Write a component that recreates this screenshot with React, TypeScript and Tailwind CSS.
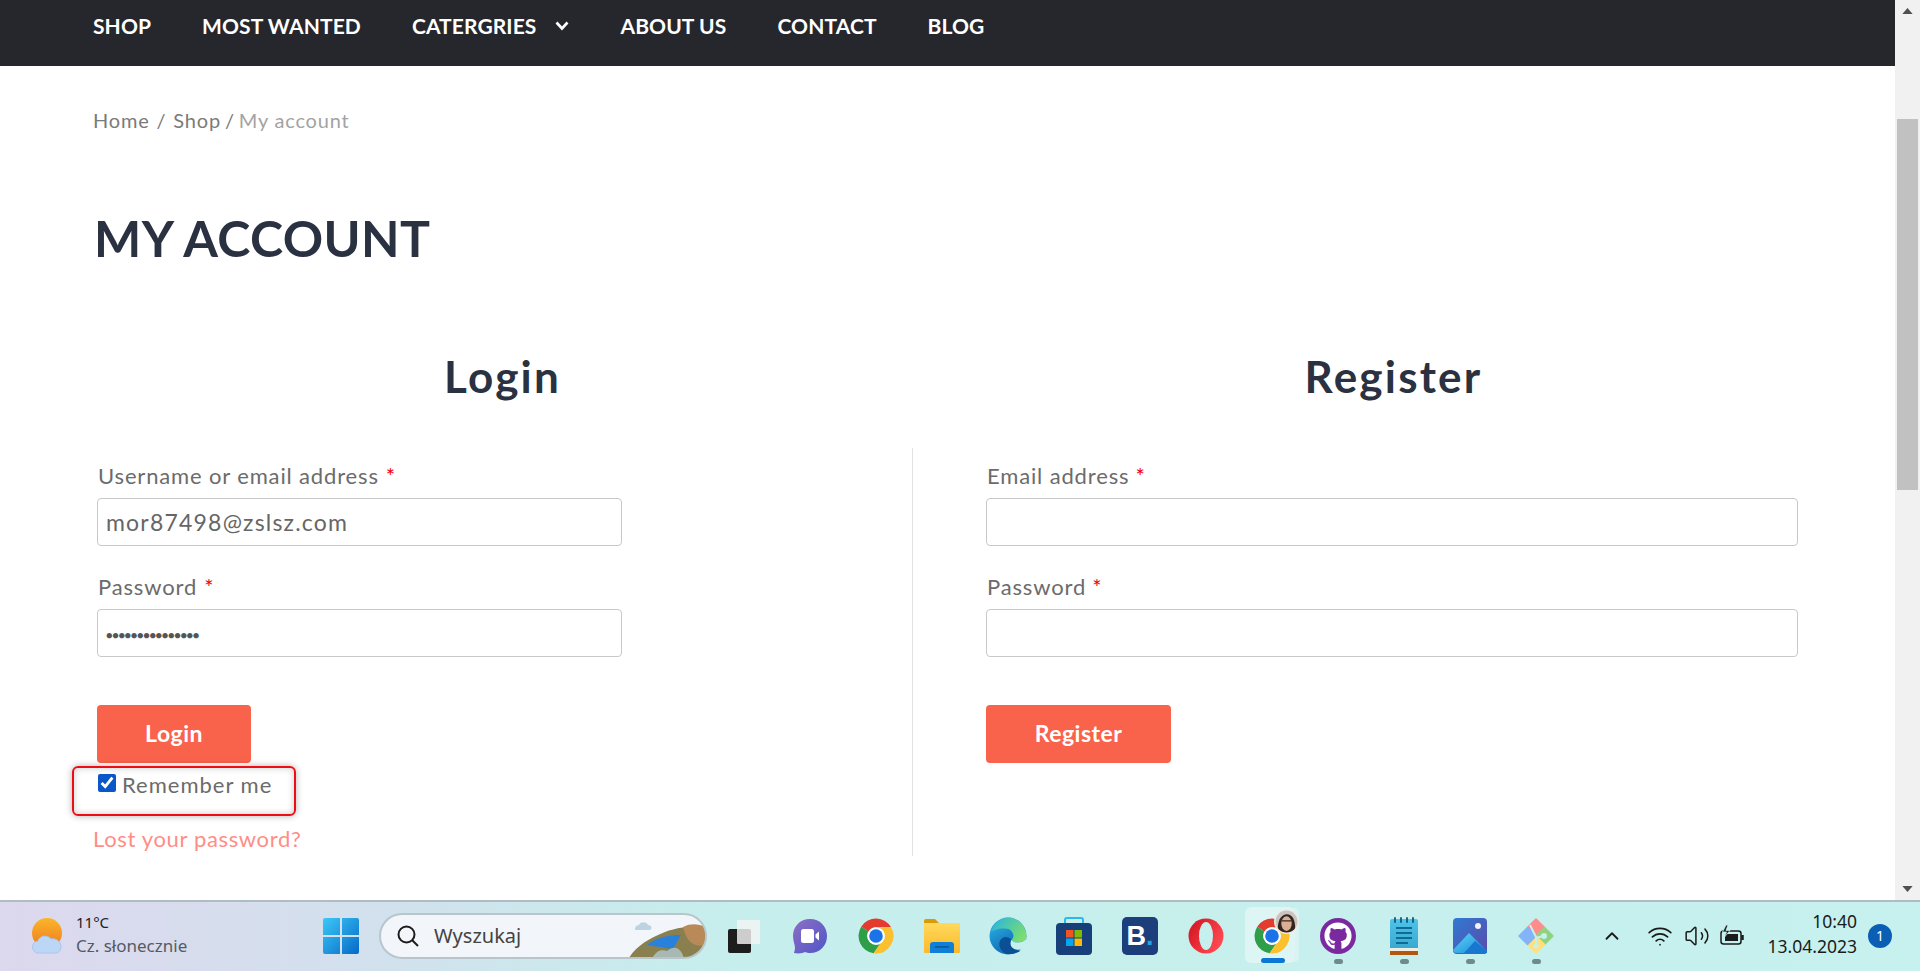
import React from "react";
import { ChevronUp, Wifi, Volume2 } from "lucide-react";
import { FaGithub } from "react-icons/fa";

const navLinks = ["SHOP", "MOST WANTED", "CATERGRIES", "ABOUT US", "CONTACT", "BLOG"];

const ChromeIcon = () => (
  <svg viewBox="0 0 48 48" className="w-[38px] h-[38px]">
    <path d="M5.5 12A22 22 0 0 1 43.05 13H24A11 11 0 0 0 14.5 18.5Z" fill="#e33b2e" />
    <path d="M5.5 12A22 22 0 0 0 21 45.8L29.5 33.5A11 11 0 0 1 14.5 18.5Z" fill="#2f9e48" />
    <path d="M24 13H43.05A22 22 0 0 1 21 45.8L29.5 33.5A11 11 0 0 0 24 13Z" fill="#fbc02d" />
    <circle cx="24" cy="24" r="11" fill="#fff" />
    <circle cx="24" cy="24" r="8.6" fill="#1a73e8" />
  </svg>
);

const TaskViewIcon = () => (
  <svg viewBox="0 0 36 36" className="w-[36px] h-[36px]">
    <rect x="2" y="11" width="23" height="24" rx="2" fill="#1d1d1d" />
    <rect x="11" y="2" width="23" height="24" rx="1" fill="#f4f4f4" fillOpacity="0.82" />
  </svg>
);

const MeetIcon = () => (
  <svg viewBox="0 0 36 36" className="w-[36px] h-[36px]">
    <defs>
      <linearGradient id="meet" x1="0" y1="0" x2="1" y2="1">
        <stop offset="0" stopColor="#8d6fc4" />
        <stop offset="1" stopColor="#4f56c6" />
      </linearGradient>
    </defs>
    <path d="M18 1C8 1 1 8.500 1 18c0 5 2 9 2 12 0 2-1 4-1 5 5 1 9 0 11-1 2 .7 3.500 1 5 1 10 0 17-7.500 17-17S28 1 18 1Z" fill="url(#meet)" />
    <rect x="9" y="11" width="13" height="14" rx="2.500" fill="#fff" />
    <path d="M23.500 16.500 27 13.500v9l-3.500-3Z" fill="#fff" />
  </svg>
);

const FolderIcon = () => (
  <svg viewBox="0 0 38 36" className="w-[38px] h-[36px]">
    <defs>
      <linearGradient id="folder" x1="0" y1="0" x2="0" y2="1">
        <stop offset="0" stopColor="#ffd95c" />
        <stop offset="1" stopColor="#fcb92b" />
      </linearGradient>
    </defs>
    <path d="M1 3a2 2 0 0 1 2-2h9l4 4h-15Z" fill="#d99b07" />
    <rect x="1" y="5" width="36" height="30" rx="1" fill="url(#folder)" />
    <path d="M7 35V27a3 3 0 0 1 3-3h18a3 3 0 0 1 3 3v8Z" fill="#0f7fd8" />
    <rect x="12" y="28" width="14" height="1.800" fill="#0a5ca3" />
  </svg>
);

const EdgeIcon = () => (
  <svg viewBox="0 0 36 36" className="w-[38px] h-[38px]">
    <defs>
      <linearGradient id="edgeA" x1="0" y1="0" x2="0.6" y2="1">
        <stop offset="0" stopColor="#2fb9e8" />
        <stop offset="1" stopColor="#0c62b0" />
      </linearGradient>
      <linearGradient id="edgeB" x1="0" y1="0.2" x2="1" y2="0.7">
        <stop offset="0" stopColor="#2cb5dd" />
        <stop offset="1" stopColor="#7de06a" />
      </linearGradient>
    </defs>
    <circle cx="18" cy="18" r="17.500" fill="url(#edgeA)" />
    <path d="M35.500 18C35.500 22 32 24 27 24 24 24 22 23 22 21 18 25 21 31 28 31 31 31 33 30 34 28 35 25 35.500 21 35.500 18Z" fill="#c5f0ee" />
    <path d="M21 21C16 17 11 19 10 24 9 29 12 33 17 35 20 35.500 26 35 30 32 24 32 18 29 21 21Z" fill="#0b4f94" />
    <path d="M2 14C5 5 12 .5 18 .5 28 .5 35.500 9 35.500 18 35.500 22 32 24 27 24 22 24 21 22 23 19 24 14 19 10 14 11 8 11 4 13 2 14Z" fill="url(#edgeB)" />
  </svg>
);

const StoreIcon = () => (
  <svg viewBox="0 0 36 38" className="w-[36px] h-[38px]">
    <path d="M9 9V3a2 2 0 0 1 2-2h14a2 2 0 0 1 2 2v6" fill="none" stroke="#2bb8ee" strokeWidth="2" />
    <rect y="6" width="36" height="32" rx="4" fill="#17407a" />
    <rect x="10" y="13" width="7.500" height="7.500" fill="#f25325" />
    <rect x="18.500" y="13" width="7.500" height="7.500" fill="#80bb02" />
    <rect x="10" y="21.500" width="7.500" height="7.500" fill="#04a6f0" />
    <rect x="18.500" y="21.500" width="7.500" height="7.500" fill="#ffb902" />
  </svg>
);

const OperaIcon = () => (
  <svg viewBox="0 0 36 36" className="w-[36px] h-[36px]">
    <defs>
      <linearGradient id="opera" x1="0" y1="0" x2="1" y2="0.6">
        <stop offset="0" stopColor="#d0101f" />
        <stop offset="1" stopColor="#ff4a50" />
      </linearGradient>
    </defs>
    <circle cx="18" cy="18" r="17.500" fill="url(#opera)" />
    <ellipse cx="18" cy="18" rx="7" ry="14" fill="#c5f0ee" />
  </svg>
);

const NotepadIcon = () => (
  <svg viewBox="0 0 30 38" className="w-[30px] h-[38px]">
    <defs>
      <linearGradient id="pad" x1="0" y1="0" x2="0" y2="1">
        <stop offset="0" stopColor="#4fc3ea" />
        <stop offset="1" stopColor="#3aa9cf" />
      </linearGradient>
    </defs>
    <rect x="1" y="32" width="28" height="6" fill="#b3560f" />
    <rect x="1" y="31" width="28" height="3" fill="#f1ece4" />
    <path d="M1 4a2 2 0 0 1 2-2h24a2 2 0 0 1 2 2v27H1Z" fill="url(#pad)" />
    <path d="M6 1v4M12 1v4M18 1v4M24 1v4" stroke="#0c5a80" strokeWidth="1.800" strokeLinecap="round" />
    <path d="M7 11h16M7 16h16M7 21h16M7 26h12" stroke="#0e6b93" strokeWidth="1.800" />
  </svg>
);

const PhotosIcon = () => (
  <svg viewBox="0 0 34 36" className="w-[34px] h-[36px]">
    <defs>
      <linearGradient id="photosBg" x1="0" y1="0" x2="1" y2="1">
        <stop offset="0" stopColor="#2f7ad4" />
        <stop offset="1" stopColor="#5b4aa8" />
      </linearGradient>
      <linearGradient id="photosHill" x1="0" y1="0" x2="1" y2="1">
        <stop offset="0" stopColor="#5fd6f7" />
        <stop offset="1" stopColor="#1785d8" />
      </linearGradient>
    </defs>
    <rect width="34" height="36" rx="4" fill="url(#photosBg)" />
    <circle cx="25" cy="8" r="3" fill="#f2f2f8" />
    <path d="M0 32 16 15l18 18v-1 3H4a4 4 0 0 1-4-3Z" fill="url(#photosHill)" />
    <path d="M10 36 22 23l12 10a3 3 0 0 1-3 3Z" fill="#1878cf" />
  </svg>
);

const GitDiamondIcon = () => (
  <svg viewBox="0 0 38 38" className="w-[38px] h-[38px]">
    <g strokeLinejoin="round" strokeWidth="1.500">
      <path d="M19 2 27.500 10.500 19 19 10.500 10.500Z" fill="#ff8b8b" stroke="#ff8b8b" />
      <path d="M36 19 27.500 27.500 19 19 27.500 10.500Z" fill="#8fd37f" stroke="#8fd37f" />
      <path d="M19 36 10.500 27.500 19 19 27.500 27.500Z" fill="#ffe07a" stroke="#ffe07a" />
      <path d="M2 19 10.500 10.500 19 19 10.500 27.500Z" fill="#82b4f7" stroke="#82b4f7" />
    </g>
    <path d="M13 8 19 20M19 20 19 28M19 21 26 19" stroke="#c5f0ee" strokeWidth="2" fill="none" />
    <circle cx="27" cy="19" r="3" fill="#c5f0ee" />
    <circle cx="19" cy="29" r="2.500" fill="#c5f0ee" />
  </svg>
);

const BatteryIcon = () => (
  <svg viewBox="0 0 26 24" className="w-[26px] h-[24px]" fill="none" stroke="#1b1b1b" strokeWidth="1.500">
    <rect x="1" y="7" width="20" height="13" rx="2.500" />
    <rect x="5" y="10" width="13" height="7" fill="#1b1b1b" stroke="none" />
    <path d="M22.500 11v5" strokeWidth="2.500" />
    <path d="M6 1 2.500 8h4L4.500 13 10 6.500H6L8 1Z" fill="#1b1b1b" stroke="#c5f0ee" strokeWidth="0.800" />
  </svg>
);

const AppCell = ({ children, running, active }: { children: React.ReactNode; running?: boolean; active?: boolean }) => (
  <div className="relative w-[66px] h-full flex items-center justify-center">
    {active && <div className="absolute left-[6px] top-[5px] w-[50px] h-[56px] rounded-md bg-white/40 shadow-[5px_0_0_-1px_rgba(255,255,255,0.3)]" />}
    <div className="relative flex items-center justify-center">{children}</div>
    {running && <div className="absolute bottom-[5px] left-[29px] w-[9px] h-[5px] rounded-full bg-[#6f8a8c]" />}
    {active && <div className="absolute bottom-[6px] left-[22px] w-[24px] h-[5px] rounded-full bg-[#0a78d4]" />}
  </div>
);

const Field = ({ label, value, dots, gap }: { label: string; value?: string; dots?: boolean; gap: string }) => (
  <div className="mb-[29px]">
    <div className="text-[22px] leading-[24px] tracking-[0.85px] text-[#6b6b6b] mb-[10px] pl-px">
      {label}
      <span className={`text-[#f00000] ${gap}`}>*</span>
    </div>
    <div className="h-[48px] border border-[#c9c9c9] rounded-[4px] bg-white px-[8px] flex items-center text-[23px] tracking-[1.2px] text-[#666]">
      {dots ? <span className="text-[11px] tracking-[-0.4px] text-[#555] pt-1">●●●●●●●●●●●●●●●</span> : value}
    </div>
  </div>
);

export default function App() {
  return (
    <div className="h-[971px] w-[1920px] overflow-hidden flex flex-col bg-white font-['Lato',sans-serif]">
      <div className="flex h-[900px]">
        <div className="w-[1895px]">
          {/* top nav */}
          <nav className="h-[66px] bg-[#26272c] pl-[93px] pb-[15px] flex items-center gap-[51px] text-white text-[21px] font-bold tracking-[0.1px]">
            {navLinks.map((l) => (
              <span key={l} className="flex items-center leading-none">
                {l}
                {l === "CATERGRIES" && (
                  <svg viewBox="0 0 14 10" className="w-[14px] h-[10px] ml-[19px]" fill="none" stroke="#fff" strokeWidth="2.600">
                    <path d="M1.500 1.500 7 7.500l5.500-6" />
                  </svg>
                )}
              </span>
            ))}
          </nav>

          <div className="pl-[93px] pt-[42px] text-[20px] leading-[24px] tracking-[0.8px] text-[#7a7a7a]">
            Home<span className="mx-[7px]">/</span>Shop<span className="mx-[4px]">/</span>
            <span className="text-[#a3a3a3]">My account</span>
          </div>

          <h1 className="pl-[94px] mt-[76px] text-[50px] leading-[60px] font-bold tracking-[0.4px] text-[#2a3140]">MY ACCOUNT</h1>

          <div className="grid grid-cols-[819px_1fr] pl-[93px] pr-[20px] mt-[84px]">
            <h2 className="text-center text-[44px] leading-[48px] font-bold tracking-[2.2px] text-[#2a3140] mb-[48px]">Login</h2>
            <h2 className="text-center text-[44px] leading-[48px] font-bold tracking-[2.2px] text-[#2a3140] mb-[48px]">Register</h2>

            <div className="h-[408px] pt-[16px]">
              <div className="pl-[4px] w-[529px]">
                <Field label="Username or email address" value="mor87498@zslsz.com" gap="ml-[7px]" />
                <Field label="Password" dots gap="ml-[7px]" />
              </div>
              <button className="ml-[4px] mt-[48px] pb-[2px] block w-[154px] h-[58px] rounded-[4px] bg-[#f9634b] text-white text-[23px] font-bold tracking-[0.5px]">Login</button>
              <label className="relative ml-[5px] mt-[11px] flex items-start h-[26px]">
                <span className="absolute -left-[26px] -top-[8px] w-[224px] h-[50px] rounded-[6px] border-2 border-[#ee0d14] shadow-[0_0_7px_rgba(0,0,0,0.3),inset_0_0_7px_rgba(0,0,0,0.2)]" />
                <input type="checkbox" defaultChecked className="w-[18px] h-[18px] accent-[#0b57c9]" />
                <span className="ml-[6px] -mt-[1px] text-[22px] leading-[24px] tracking-[1px] text-[#6b6b6b]">Remember me</span>
              </label>
              <div className="mt-[27px] text-[22px] leading-[24px] tracking-[0.65px] text-[#ff8d86]">Lost your password?</div>
            </div>

            <div className="h-[408px] pt-[16px] border-l border-[#e2e2e2] pl-[73px]">
              <div className="w-[812px]">
                <Field label="Email address" gap="ml-[6px]" />
                <Field label="Password" gap="ml-[6px]" />
              </div>
              <button className="mt-[48px] pb-[2px] block w-[185px] h-[58px] rounded-[4px] bg-[#f9634b] text-white text-[23px] font-bold tracking-[0.5px]">Register</button>
            </div>
          </div>
        </div>

        {/* scrollbar */}
        <div className="w-[25px] bg-[#f1f1f1] flex flex-col items-center">
          <svg viewBox="0 0 12 7" className="w-[11px] h-[6px] mt-[8px] fill-[#505050]"><path d="M6 0 12 7H0Z" /></svg>
          <div className="w-[21px] h-[371px] bg-[#c1c1c1] mt-[105px]" />
          <svg viewBox="0 0 12 7" className="w-[11px] h-[6px] mt-auto mb-[8px] fill-[#505050]"><path d="M0 0H12L6 7Z" /></svg>
        </div>
      </div>

      {/* windows taskbar */}
      <div className="h-[71px] pb-[2px] border-t-2 border-[#b0bcc4] bg-[linear-gradient(90deg,#dcd8ee_0%,#d3e0ed_18%,#c6eeec_38%,#c6f1ee_100%)] flex items-center font-['Noto_Sans',sans-serif]">
        <svg viewBox="0 0 34 36" className="w-[34px] h-[36px] ml-[31px]">
          <defs>
            <linearGradient id="sun" x1="0" y1="0" x2="0" y2="1">
              <stop offset="0" stopColor="#fbb62a" />
              <stop offset="1" stopColor="#ee7b1d" />
            </linearGradient>
          </defs>
          <circle cx="16" cy="15" r="15" fill="url(#sun)" />
          <path d="M8 35a6 6 0 0 1-1-12c1-5 9-7 13-2 6-1 10 3 10 8 0 3-2 6-6 6Z" fill="#bcd7f5" stroke="#a9c4ec" />
        </svg>
        <div className="ml-[11px] -mt-[3px] w-[132px] text-[15px] leading-[24px] text-[#222]">
          <div>11°C</div>
          <div className="text-[#555b63] text-[17px]">Cz. słonecznie</div>
        </div>
        <svg viewBox="0 0 36 36" className="w-[36px] h-[36px] ml-[115px]">
          <defs>
            <linearGradient id="win" x1="0" y1="0" x2="1" y2="1">
              <stop offset="0" stopColor="#3cc8f7" />
              <stop offset="1" stopColor="#0569c8" />
            </linearGradient>
          </defs>
          <path d="M0 2a2 2 0 0 1 2-2h15v17H0ZM19 0h15a2 2 0 0 1 2 2v15H19ZM0 19h17v17H2a2 2 0 0 1-2-2ZM19 19h17v15a2 2 0 0 1-2 2H19Z" fill="url(#win)" />
        </svg>
        <div className="relative ml-[20px] w-[328px] h-[46px] rounded-full bg-[#f2f6fa] border-2 border-[#b8c6cc] flex items-center overflow-hidden">
          <svg viewBox="0 0 24 24" className="w-[24px] h-[24px] ml-[15px]" fill="none" stroke="#1b1b1b" strokeWidth="2">
            <circle cx="10.500" cy="10.500" r="8" />
            <path d="m16 16 6 6" />
          </svg>
          <span className="ml-[14px] text-[20px] text-[#444]">Wyszukaj</span>
          <svg viewBox="0 0 84 46" className="absolute right-0 top-0 w-[84px] h-[46px]">
            <path d="M14 15a4 4 0 0 1 4-5c2-4 8-3 9 0 4 0 5 5 1 5Z" fill="#bcd3e2" />
            <path d="M6 46C14 32 26 24 44 17c10-4 24-6 40-6v35Z" fill="#8a7f4e" />
            <path d="M26 30c10-8 22-10 34-10l-8 14Z" fill="#2a81dc" />
            <path d="M30 46c4-10 10-12 16-10 8-6 14-4 18 10Z" fill="#a8b9b4" />
            <path d="M62 12c8-4 16-3 22 0v18c-8 2-18 0-22-18Z" fill="#b98a58" />
          </svg>
        </div>

        <div className="flex h-full ml-[4px]">
          <AppCell><TaskViewIcon /></AppCell>
          <AppCell><MeetIcon /></AppCell>
          <AppCell><ChromeIcon /></AppCell>
          <AppCell><FolderIcon /></AppCell>
          <AppCell><EdgeIcon /></AppCell>
          <AppCell><StoreIcon /></AppCell>
          <AppCell>
            <div className="w-[36px] h-[38px] rounded-[5px] bg-[#1c3f7c] text-white font-bold text-[27px] leading-[38px] text-center font-['Liberation_Sans',sans-serif]">
              B<span className="text-[#18a7e0]">.</span>
            </div>
          </AppCell>
          <AppCell><OperaIcon /></AppCell>
          <AppCell active>
            <ChromeIcon />
            <svg viewBox="0 0 24 24" className="absolute -right-[8px] -top-[8px] w-[25px] h-[25px]">
              <circle cx="12" cy="12" r="12" fill="#efece8" />
              <clipPath id="face"><circle cx="12" cy="12" r="10.500" /></clipPath>
              <g clipPath="url(#face)">
                <rect width="24" height="24" fill="#c9c4bf" />
                <path d="M4 24c-1-8 0-18 8-19 8 0 9 10 8 19Z" fill="#33261f" />
                <ellipse cx="12" cy="14" rx="5" ry="7" fill="#dcae98" />
                <path d="M7.500 11.500h9" stroke="#33261f" strokeWidth="1.200" />
              </g>
            </svg>
          </AppCell>
          <AppCell running>
            <div className="w-[36px] h-[36px] rounded-full bg-[#7a2a9e] flex items-center justify-center">
              <FaGithub className="w-[28px] h-[28px] text-white" />
            </div>
          </AppCell>
          <AppCell running><NotepadIcon /></AppCell>
          <AppCell running><PhotosIcon /></AppCell>
          <AppCell running><GitDiamondIcon /></AppCell>
        </div>

        <ChevronUp className="ml-[32px] w-[22px] h-[22px] text-[#1b1b1b]" strokeWidth={2} />
        <Wifi className="ml-[24px] w-[26px] h-[26px] text-[#1b1b1b]" strokeWidth={1.6} />
        <Volume2 className="ml-[11px] w-[26px] h-[26px] text-[#1b1b1b]" strokeWidth={1.4} />
        <div className="ml-[10px]"><BatteryIcon /></div>

        <div className="ml-[17px] -mt-[4px] w-[94px] text-right text-[17.500px] leading-[25px] text-[#1b1b1b]">
          <div>10:40</div>
          <div>13.04.2023</div>
        </div>
        <div className="ml-[11px] w-[24px] h-[24px] rounded-full bg-[#0a5fb4] text-white text-[14px] flex items-center justify-center">1</div>
      </div>
    </div>
  );
}
